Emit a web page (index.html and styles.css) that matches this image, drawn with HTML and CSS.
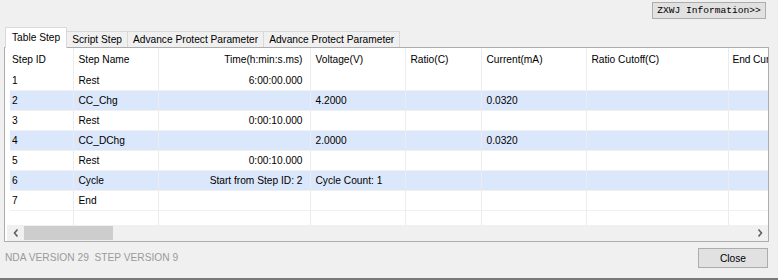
FILE: index.html
```html
<!DOCTYPE html>
<html lang="en">
<head>
    <meta charset="UTF-8">
    <title>Step Viewer</title>
    <link rel="stylesheet" href="styles.css">
</head>
<body>
    <div class="window">
        <div class="top-bar">
            <button class="info-btn">ZXWJ Information&gt;&gt;</button>
        </div>

        <div class="tabs">
            <div class="tab active">Table Step</div>
            <div class="tab">Script Step</div>
            <div class="tab">Advance Protect Parameter</div>
            <div class="tab">Advance Protect Parameter</div>
        </div>

        <div class="pane">
            <div class="grid-wrap">
                <table class="step-table">
                    <colgroup>
                        <col class="c-id">
                        <col class="c-name">
                        <col class="c-time">
                        <col class="c-volt">
                        <col class="c-ratio">
                        <col class="c-cur">
                        <col class="c-cutoff">
                        <col class="c-end">
                    </colgroup>
                    <thead>
                        <tr>
                            <th>Step ID</th>
                            <th>Step Name</th>
                            <th class="num">Time(h:min:s.ms)</th>
                            <th>Voltage(V)</th>
                            <th>Ratio(C)</th>
                            <th>Current(mA)</th>
                            <th>Ratio Cutoff(C)</th>
                            <th class="last">End Cur</th>
                        </tr>
                    </thead>
                    <tbody>
                        <tr>
                            <td>1</td><td>Rest</td><td class="num">6:00:00.000</td>
                            <td></td><td></td><td></td><td></td><td></td>
                        </tr>
                        <tr class="alt">
                            <td>2</td><td>CC_Chg</td><td class="num"></td>
                            <td>4.2000</td><td></td><td>0.0320</td><td></td><td></td>
                        </tr>
                        <tr>
                            <td>3</td><td>Rest</td><td class="num">0:00:10.000</td>
                            <td></td><td></td><td></td><td></td><td></td>
                        </tr>
                        <tr class="alt">
                            <td>4</td><td>CC_DChg</td><td class="num"></td>
                            <td>2.0000</td><td></td><td>0.0320</td><td></td><td></td>
                        </tr>
                        <tr>
                            <td>5</td><td>Rest</td><td class="num">0:00:10.000</td>
                            <td></td><td></td><td></td><td></td><td></td>
                        </tr>
                        <tr class="alt">
                            <td>6</td><td>Cycle</td><td class="num">Start from Step ID: 2</td>
                            <td>Cycle Count: 1</td><td></td><td></td><td></td><td></td>
                        </tr>
                        <tr>
                            <td>7</td><td>End</td><td class="num"></td>
                            <td></td><td></td><td></td><td></td><td></td>
                        </tr>
                        <tr>
                            <td></td><td></td><td></td>
                            <td></td><td></td><td></td><td></td><td></td>
                        </tr>
                    </tbody>
                </table>
            </div>
            <div class="hscroll">
                <div class="arrow">
                    <svg width="6" height="8" viewBox="0 0 6 8"><path d="M4.5 0.5 L1.5 4 L4.5 7.5" fill="none" stroke="#606060" stroke-width="1.6"/></svg>
                </div>
                <div class="track"><div class="thumb"></div></div>
                <div class="arrow">
                    <svg width="6" height="8" viewBox="0 0 6 8"><path d="M1.5 0.5 L4.5 4 L1.5 7.5" fill="none" stroke="#606060" stroke-width="1.6"/></svg>
                </div>
            </div>
        </div>

        <div class="footer">
            <span class="version">NDA VERSION 29&nbsp; STEP VERSION 9</span>
            <button class="close-btn">Close</button>
        </div>
    </div>
</body>
</html>
```

FILE: styles.css
```css
body {
    margin: 0;
    background-color: #f0f0f0;
    font-family: 'Liberation Sans', Arial, sans-serif;
    font-size: 10.2px;
    color: #000;
}
.window {
    height: 278px;
    border-bottom: 2px solid #7a7a7a;
    display: flex;
    flex-direction: column;
}
.top-bar {
    height: 27px;
    display: flex;
    justify-content: flex-end;
    align-items: flex-start;
    padding-right: 12px;
    box-sizing: border-box;
}
.info-btn {
    margin-top: 2px;
    width: 114px;
    height: 17px;
    padding: 0;
    background-color: #e1e1e1;
    border: 1px solid #adadad;
    font-family: 'Liberation Mono', monospace;
    font-size: 9.6px;
    color: #000;
}
.tabs {
    display: flex;
    align-items: flex-end;
    height: 20px;
    padding-left: 5px;
}
.tab {
    height: 16px;
    line-height: 15px;
    padding: 0 5px;
    border: 1px solid #d9d9d9;
    border-bottom: none;
    border-left: none;
    box-sizing: border-box;
    white-space: nowrap;
}
.tab.active {
    height: 21px;
    line-height: 19px;
    padding: 0 6px;
    background-color: #fff;
    border-left: 1px solid #d9d9d9;
    margin-bottom: -1px;
    position: relative;
    z-index: 1;
}
.pane {
    margin-left: 4px;
    width: 765px;
    height: 195px;
    border: 1px solid #adadad;
    box-sizing: border-box;
    background-color: #fff;
    padding-left: 5px;
}
.grid-wrap {
    height: 177px;
    overflow: hidden;
}
.step-table {
    table-layout: fixed;
    border-collapse: collapse;
    width: 818px;
}
.c-id { width: 63px; }
.c-name { width: 85px; }
.c-time { width: 152px; }
.c-volt { width: 95px; }
.c-ratio { width: 76px; }
.c-cur { width: 105px; }
.c-cutoff { width: 142px; }
.c-end { width: 100px; }
th, td {
    padding: 0 5px;
    text-align: left;
    font-weight: normal;
    white-space: nowrap;
    overflow: hidden;
    border-right: 1px solid #ececec;
}
th {
    height: 23px;
}
th.last {
    padding-left: 4px;
    letter-spacing: -0.1px;
}
td {
    height: 19px;
    border-bottom: 1px solid #f0f0f0;
}
th:first-child, td:first-child {
    padding-left: 2px;
}
.num {
    text-align: right;
    padding-right: 7px;
}
.alt td {
    background-color: #dbe7fb;
}
.hscroll {
    display: flex;
    height: 16px;
    background-color: #f0f0f0;
    margin-left: -3px;
}
.arrow {
    width: 17px;
    display: flex;
    align-items: center;
    justify-content: center;
}
.track {
    flex: 1;
    display: flex;
    align-items: center;
}
.thumb {
    width: 89px;
    height: 14px;
    background-color: #cdcdcd;
}
.footer {
    flex: 1;
    display: flex;
    justify-content: space-between;
    align-items: flex-start;
    padding: 6px 10px 0 5px;
}
.version {
    color: #9a9a9a;
    line-height: 19px;
}
.close-btn {
    width: 70px;
    height: 20px;
    padding: 0;
    background-color: #e1e1e1;
    border: 1px solid #adadad;
    font-family: 'Liberation Sans', Arial, sans-serif;
    font-size: 10.2px;
    color: #000;
}
```
